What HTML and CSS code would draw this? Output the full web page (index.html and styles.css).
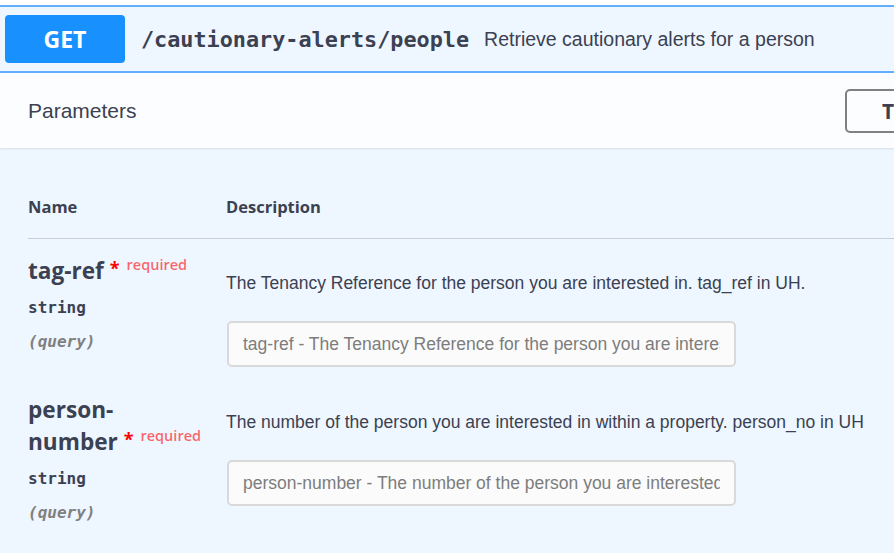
FILE: index.html
```html
<!DOCTYPE html>
<html>
<head>
<meta charset="utf-8">
<link rel="stylesheet" href="styles.css">
</head>
<body>
<div class="opblock">
  <div class="summary">
    <span class="method">GET</span>
    <span class="path">/cautionary-alerts/people</span>
    <span class="summary-desc">Retrieve cautionary alerts for a person</span>
  </div>
  <div class="section-header">
    <span class="section-title">Parameters</span>
    <button class="try-out">Try it out</button>
  </div>
  <div class="section-body">
    <div class="params">
      <div class="thead">
        <div class="col-name">Name</div>
        <div class="col-desc">Description</div>
      </div>
      <div class="row">
        <div class="col-name">
          <div class="pname">tag-ref <span class="flag"><span class="star">*</span><span class="req">required</span></span></div>
          <div class="ptype">string</div>
          <div class="pin">(query)</div>
        </div>
        <div class="col-desc">
          <div class="pdesc">The Tenancy Reference for the person you are interested in. tag_ref in UH.</div>
          <input class="pinput" type="text" placeholder="tag-ref - The Tenancy Reference for the person you are interested in. tag_ref in UH.">
        </div>
      </div>
      <div class="row">
        <div class="col-name">
          <div class="pname">person-number <span class="flag"><span class="star">*</span><span class="req">required</span></span></div>
          <div class="ptype">string</div>
          <div class="pin">(query)</div>
        </div>
        <div class="col-desc">
          <div class="pdesc">The number of the person you are interested in within a property. person_no in UH</div>
          <input class="pinput" type="text" placeholder="person-number - The number of the person you are interested in within a property. person_no in UH">
        </div>
      </div>
    </div>
  </div>
</div>
</body>
</html>
```

FILE: styles.css
```css
html, body {
  margin: 0;
  padding: 0;
  background: #ffffff;
  overflow: hidden;
  width: 894px;
  height: 553px;
}
body {
  font-family: "Liberation Sans", Arial, sans-serif;
  color: #3b4151;
}
.opblock {
  margin-top: 5px;
  width: 1000px;
  background: #eef6ff;
  border-top: 2px solid #61affe;
  min-height: 600px;
}
.summary {
  display: flex;
  align-items: center;
  height: 64px;
  padding-left: 5px;
  border-bottom: 2px solid #61affe;
  box-sizing: content-box;
}
.method {
  width: 120px;
  height: 48px;
  background: #1891ff;
  border-radius: 4px;
  color: #fff;
  font-family: "Open Sans", sans-serif;
  font-weight: 700;
  font-size: 23px;
  display: flex;
  align-items: center;
  justify-content: center;
}
.path {
  margin-left: 16px;
  font-family: "DejaVu Sans Mono", monospace;
  font-weight: 700;
  font-size: 21.8px;
  color: #3b4151;
}
.summary-desc {
  margin-left: 15px;
  font-size: 19.5px;
  color: #3b4151;
}
.section-header {
  display: flex;
  align-items: center;
  height: 75px;
  padding-left: 28px;
  background: #fcfdfe;
  box-shadow: 0 1px 2px rgba(0,0,0,0.1);
}
.section-title {
  font-size: 21px;
  color: #3b4151;
  flex: none;
  width: 817px;
}
.try-out {
  flex: none;
  height: 44px;
  width: 140px;
  border: 2px solid #808080;
  border-radius: 5px;
  background: transparent;
  font-family: "Open Sans", sans-serif;
  font-weight: 700;
  font-size: 21px;
  color: #3b4151;
  text-align: left;
  padding-left: 35px;
  margin-top: 1px;
  white-space: nowrap;
}
.section-body {
  padding: 49px 0 0 28px;
}
.thead {
  display: flex;
  line-height: 20px;
  padding-bottom: 21px;
  border-bottom: 1px solid #c9cdd4;
  font-family: "Open Sans", sans-serif;
  font-weight: 700;
  font-size: 16.5px;
  color: #3b4151;
}
.col-name {
  width: 198px;
  flex: none;
}
.col-desc {
  flex: 1;
}
.row {
  display: flex;
  padding-top: 16px;
  padding-bottom: 10px;
}
.row + .row {
  padding-top: 17px;
}
.pname {
  font-family: "Open Sans", sans-serif;
  font-weight: 700;
  font-size: 22.6px;
  line-height: 32px;
  color: #3b4151;
  width: 172px;
}
.flag {
  white-space: nowrap;
  margin-right: -40px;
}
.star {
  color: #ff0000;
  font-size: 18px;
  position: relative;
  top: -4px;
}
.req {
  color: rgba(255,0,0,0.6);
  font-size: 14.5px;
  font-family: "Open Sans", sans-serif;
  font-weight: 600;
  position: relative;
  top: -9px;
  padding-left: 7px;
}
.ptype {
  font-family: "DejaVu Sans Mono", monospace;
  font-weight: 700;
  font-size: 16px;
  margin-top: 7px;
  line-height: 22px;
}
.pin {
  font-family: "DejaVu Sans Mono", monospace;
  font-style: italic;
  font-weight: 700;
  font-size: 16px;
  color: #808080;
  margin-top: 12px;
  line-height: 22px;
}
.pdesc {
  font-size: 17.5px;
  color: #3b4151;
  margin-top: 17px;
  line-height: 22px;
}
.pinput {
  display: block;
  margin-top: 27px;
  width: 509px;
  height: 46px;
  box-sizing: border-box;
  border: 2px solid #d9d9d9;
  border-radius: 5px;
  background: #fbfbfb;
  padding: 0 14px;
  font-family: "Liberation Sans", Arial, sans-serif;
  font-size: 17.5px;
  color: #3b4151;
  margin-left: 1px;
}
.pinput::placeholder {
  color: #7d7d7d;
}
```
